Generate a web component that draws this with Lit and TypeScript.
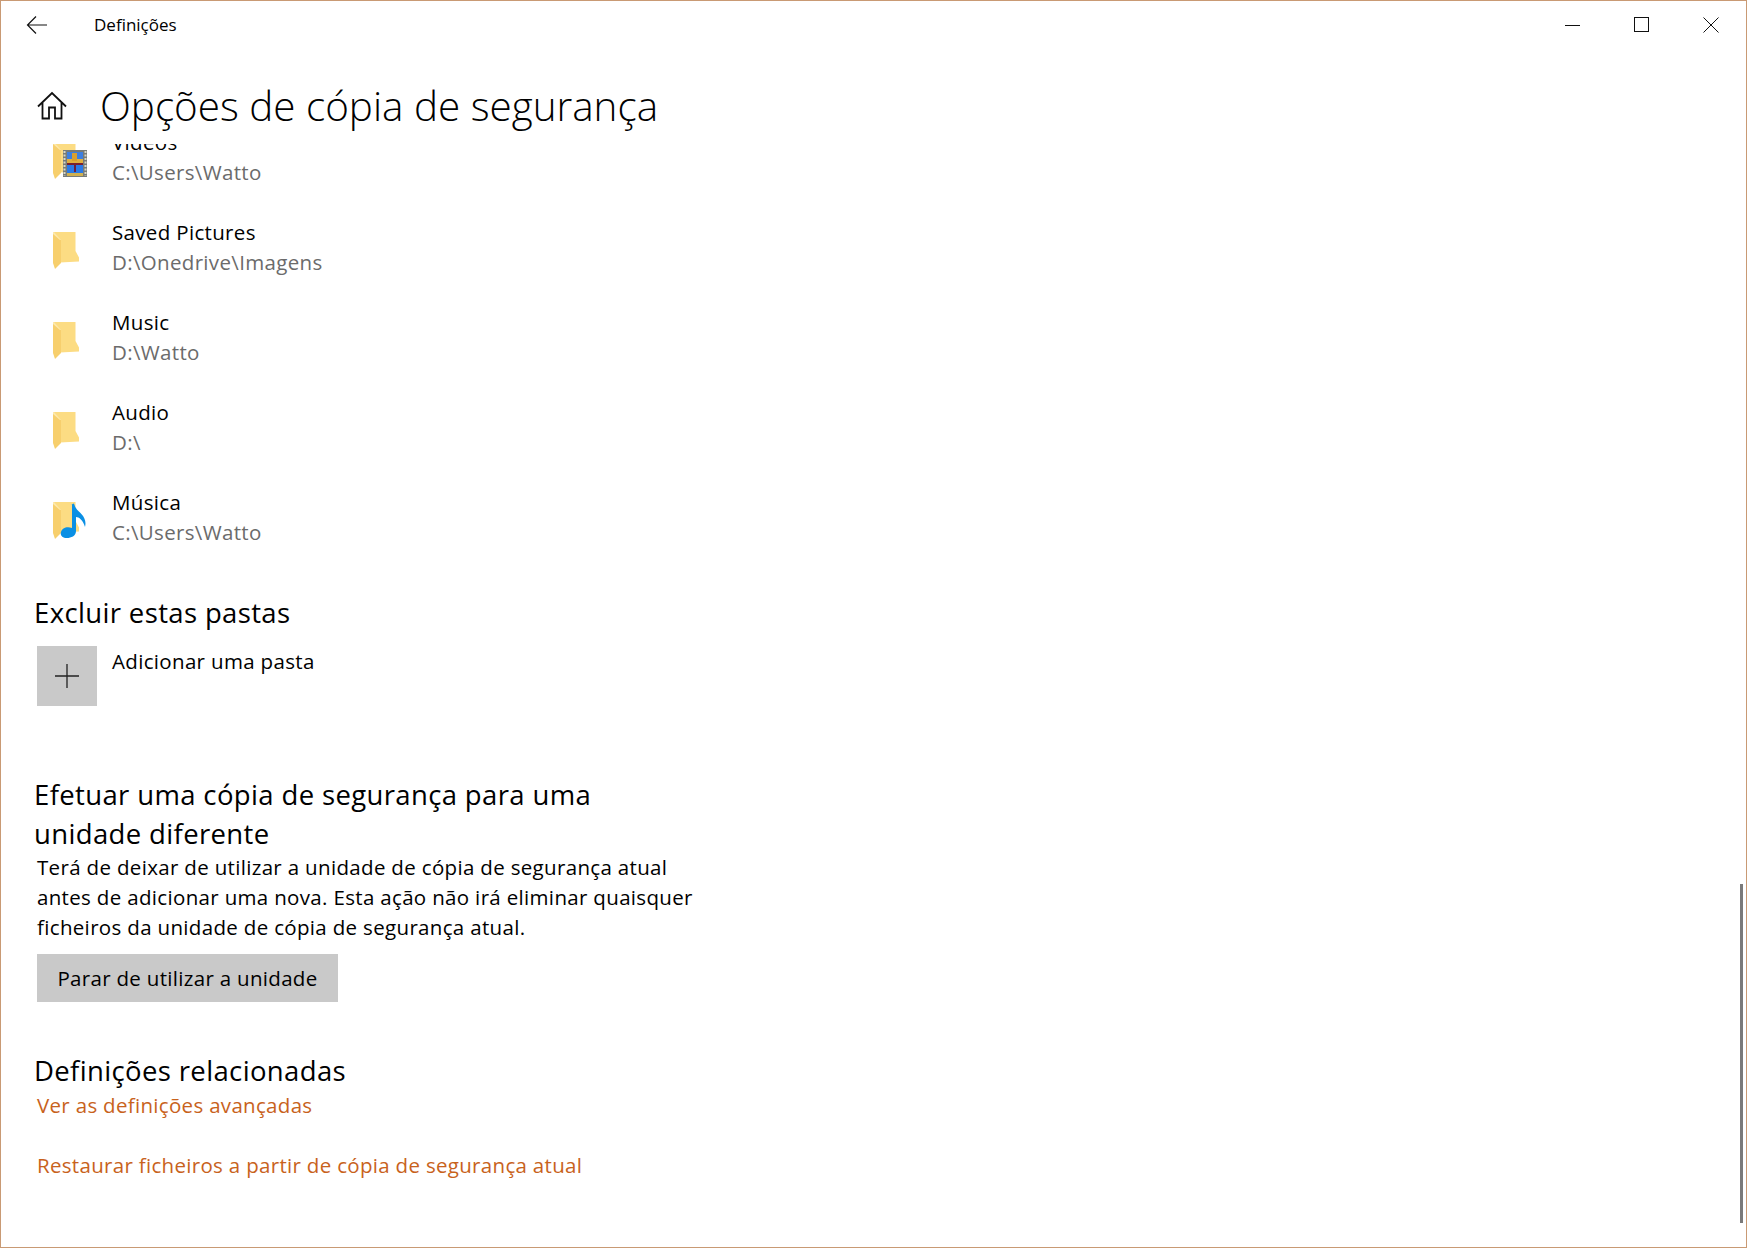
import { LitElement, html, css, svg } from "lit";
import { customElement } from "lit/decorators.js";

const folder = svg`
  <path d="M1 0 H23.5 V19 L27 25.5 V29.5 L8 30.5 Z" fill="#fcdc83"/>
  <path d="M1 0 L9 8 V31 L3 37 L1 31 Z" fill="#f7cf6d"/>
  <path d="M1 0 L2 0 L9 8 H8 L1 2 Z" fill="#fde9ad"/>
`;

const rows = [
  { name: "Saved Pictures", path: "D:\\Onedrive\\Imagens", kind: "" },
  { name: "Music", path: "D:\\Watto", kind: "" },
  { name: "Audio", path: "D:\\", kind: "" },
  { name: "Música", path: "C:\\Users\\Watto", kind: "music" },
];

@customElement("app-root")
export class AppRoot extends LitElement {
  static styles = css`
    :host {
      display: block;
      height: 1248px;
      box-sizing: border-box;
      border: 1px solid #c99a74;
      background: #fff;
      color: #000;
      font-family: "Open Sans", "Noto Sans", sans-serif;
      overflow: hidden;
      position: relative;
    }
    .titlebar {
      height: 47px;
      display: flex;
      align-items: center;
    }
    .back { margin-left: 24px; width: 24px; height: 24px; }
    .apptitle { margin-left: 45px; font-size: 17px; }
    .winbtns { margin-left: auto; display: flex; margin-right: 1px; }
    .win { width: 69px; height: 47px; display: flex; align-items: center; justify-content: center; }
    .header { height: 96px; display: flex; align-items: center; padding-top: 20px; box-sizing: border-box; }
    .home { margin-left: 36px; width: 30px; height: 30px; }
    h1 {
      margin: 0 0 0 33px;
      font-weight: 300;
      font-size: 40.4px;
      line-height: 54px;
      white-space: nowrap;
    }
    .scroll { height: 1103px; overflow: hidden; }
    .content { margin-top: -31px; padding-left: 36px; width: 680px; }
    .row { height: 90px; display: flex; }
    .ico { width: 36px; height: 40px; flex: none; margin: 29px 0 0 15px; overflow: visible; }
    .txt { margin-left: 24px; font-size: 20.5px; letter-spacing: 0.33px; padding-top: 14px; line-height: 30px; white-space: nowrap; }
    .sub { color: #6b6b6b; }
    h2 {
      margin: 0 0 0 -3px;
      font-weight: 400;
      font-size: 27.5px;
      line-height: 39px;
      letter-spacing: 0.36px;
      white-space: nowrap;
    }
    .h-excl { margin-top: 30px; }
    .add { display: flex; margin-top: 14px; }
    .plus { width: 60px; height: 60px; background: #c9c9c9; display: flex; align-items: center; justify-content: center; }
    .addlbl { margin-left: 15px; font-size: 20.5px; letter-spacing: 0.33px; line-height: 30px; }
    .h-copy { margin-top: 69px; }
    p { margin: -1px 0 0; font-size: 20.5px; line-height: 30px; letter-spacing: 0.33px; white-space: nowrap; }
    .btn {
      display: flex;
      align-items: center;
      justify-content: center;
      width: 301px;
      height: 48px;
      background: #c9c9c9;
      font-size: 20.5px;
      letter-spacing: 0.31px;
      margin-top: 12px;
    }
    .h-rel { margin-top: 49px; }
    .link { display: block; color: #c8621c; font-size: 20.5px; line-height: 30px; letter-spacing: 0.31px; white-space: nowrap; }
    .l2 { margin-top: 30px; }
    .thumb {
      position: absolute;
      right: 3px;
      top: 883px;
      width: 3px;
      height: 339px;
      background: #7a7a7a;
    }
  `;

  render() {
    return html`
      <div class="titlebar">
        <svg class="back" viewBox="0 0 24 24" fill="none" stroke="#111" stroke-width="1.2">
          <path d="M22 12 H3 M11 3.5 L2.5 12 L11 20.5" />
        </svg>
        <span class="apptitle">Definições</span>
        <div class="winbtns">
          <div class="win"><svg width="16" height="16" fill="none" stroke="#111"><path d="M0 8.5 H15"/></svg></div>
          <div class="win"><svg width="16" height="16" fill="none" stroke="#111"><rect x="0.5" y="0.5" width="14" height="14"/></svg></div>
          <div class="win"><svg width="16" height="16" fill="none" stroke="#111"><path d="M0.5 0.5 L15.5 15.5 M15.5 0.5 L0.5 15.5"/></svg></div>
        </div>
      </div>
      <div class="header">
        <svg class="home" viewBox="0 0 30 30" fill="none" stroke="#111" stroke-width="1.8">
          <path d="M1 15.5 L15 2 L29 15.5 M5.5 11.5 V27.5 H12 V16.5 H18 V27.5 H24.5 V11.5" />
        </svg>
        <h1>Opções de cópia de segurança</h1>
      </div>
      <div class="scroll">
        <div class="content">
          <div class="row">
            <svg class="ico" viewBox="0 0 36 40">
              ${folder}
              <g transform="translate(0,9)">
                <rect x="11" y="-1" width="24" height="27" fill="#777b78"/>
                <path d="M12.5 0 V25 M33.5 0 V25" stroke="#d8d8c8" stroke-width="2" stroke-dasharray="2 1.5"/>
                <rect x="15" y="1" width="16" height="11" fill="#3d7fe0"/>
                <rect x="15" y="14" width="16" height="11" fill="#2a7ae8"/>
                <path d="M15 8 h16 v4 h-16 z" fill="#e0b040"/>
                <path d="M20 2 h5 v8 h-5 z" fill="#d8a030"/>
                <path d="M15 12 h16 v2 h-16 z" fill="#7a2030"/>
                <path d="M22 14 h2 v7 h-2 z" fill="#6a2040"/>
                <path d="M15 22 h16 v3 h-16 z" fill="#d0b050"/>
              </g>
            </svg>
            <div class="txt"><div>Vídeos</div><div class="sub">C:\\Users\\Watto</div></div>
          </div>
          ${rows.map(
            (r) => html`<div class="row">
              <svg class="ico" viewBox="0 0 36 40">
                ${folder}
                ${r.kind === "music"
                  ? svg`<path d="M19.5 3 C21 1 22 1 22.5 3 C24 10 36 13 33 25 C31 18 27 15 24 15 V29 C24 34 19 36 15 36 C10 36 8 33 9 30 C10 26 15 24 20 26 V3 Z" fill="#0a8fe4"/>`
                  : ""}
              </svg>
              <div class="txt"><div>${r.name}</div><div class="sub">${r.path}</div></div>
            </div>`
          )}
          <h2 class="h-excl">Excluir estas pastas</h2>
          <div class="add">
            <div class="plus">
              <svg width="26" height="26" fill="none" stroke="#222" stroke-width="1.3"><path d="M13 1 V25 M1 13 H25"/></svg>
            </div>
            <span class="addlbl">Adicionar uma pasta</span>
          </div>
          <h2 class="h-copy">Efetuar uma cópia de segurança para uma<br />unidade diferente</h2>
          <p>Terá de deixar de utilizar a unidade de cópia de segurança atual<br />antes de adicionar uma nova. Esta ação não irá eliminar quaisquer<br />ficheiros da unidade de cópia de segurança atual.</p>
          <div class="btn">Parar de utilizar a unidade</div>
          <h2 class="h-rel">Definições relacionadas</h2>
          <span class="link">Ver as definições avançadas</span>
          <span class="link l2">Restaurar ficheiros a partir de cópia de segurança atual</span>
        </div>
      </div>
      <div class="thumb"></div>
    `;
  }
}
